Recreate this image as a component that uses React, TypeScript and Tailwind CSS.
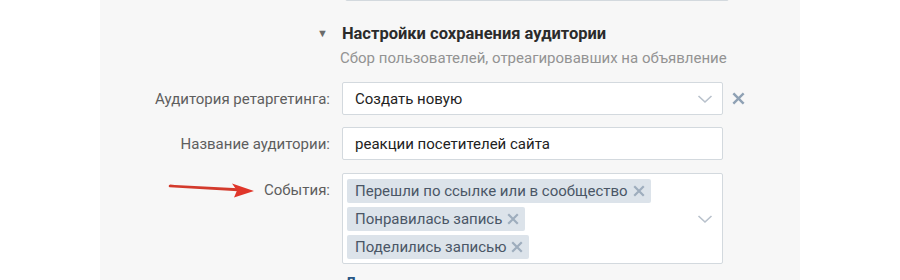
import React from "react";

const Chevron = () => (
  <svg width="16" height="10" viewBox="0 0 16 10" className="shrink-0">
    <path d="M1.5 2 L8 8 L14.5 2" fill="none" stroke="#b8c1cc" strokeWidth="1.6" />
  </svg>
);

const Cross = ({ size = 12, color = "#9eadbd" }: any) => (
  <svg width={size} height={size} viewBox="0 0 12 12" className="shrink-0">
    <path d="M2 2 L10 10 M10 2 L2 10" stroke={color} strokeWidth="2.2" strokeLinecap="square" />
  </svg>
);

const Tag = ({ text }: { text: string }) => (
  <div className="flex items-center h-[24px] pl-[8px] pr-[6px] gap-[5px] rounded-[2px] bg-[#dce3ea] text-[#4a5666]">
    <span>{text}</span>
    <Cross />
  </div>
);

const App = () => {
  return (
    <div className="w-[900px] h-[280px] bg-white overflow-hidden font-['Roboto',sans-serif] text-[15px] leading-[20px]">
      <div className="flow-root mx-auto w-[700px] h-full bg-[#f7f7f7]">
        <div className="ml-[245px] w-[384px] h-[33px] mt-[-32px] bg-white border border-[#d3d9de] rounded-[2px]" />

        <div className="flex items-center mt-[23px] ml-[217px] gap-[14px]">
          <span className="text-[#6b6b6b] text-[11px]">▼</span>
          <span className="font-bold text-[#2b2b2b] text-[16.5px]">Настройки сохранения аудитории</span>
        </div>
        <div className="ml-[240px] mt-[4px] text-[#939393]">
          Сбор пользователей, отреагировавших на объявление
        </div>

        <div className="flex items-center mt-[14px]">
          <div className="w-[242px] pr-[12px] text-right text-[#5e5e5e]">Аудитория ретаргетинга:</div>
          <div className="w-[381px] h-[33px] flex items-center justify-between pl-[12px] pr-[9px] bg-white border border-[#d3d9de] rounded-[2px] text-[#222]">
            <span>Создать новую</span>
            <Chevron />
          </div>
          <div className="ml-[9px]">
            <Cross size={13} color="#8fa1b4" />
          </div>
        </div>

        <div className="flex items-center mt-[12px]">
          <div className="w-[242px] pr-[12px] text-right text-[#5e5e5e]">Название аудитории:</div>
          <div className="w-[381px] h-[33px] flex items-center pl-[12px] bg-white border border-[#d3d9de] rounded-[2px] text-[#222]">
            реакции посетителей сайта
          </div>
        </div>

        <div className="flex items-start mt-[13px]">
          <div className="w-[242px] pr-[12px] pt-[7px] flex justify-end items-center gap-[8px] text-[#5e5e5e]">
            <svg width="88" height="16" viewBox="0 0 88 16">
              <path d="M2 4 L70 7.6 L70 7.9 Z" fill="#d33a2c" stroke="#d33a2c" strokeWidth="2.6" strokeLinejoin="round" />
              <path d="M64 1.5 L86 9 L66 15.5 L69 8.5 Z" fill="#e0362a" />
            </svg>
            <span>События:</span>
          </div>
          <div className="w-[381px] h-[91px] flex items-center pl-[4px] pr-[9px] bg-white border border-[#d3d9de] rounded-[2px]">
            <div className="flex-1 flex flex-col items-start gap-[4px]">
              <Tag text="Перешли по ссылке или в сообщество" />
              <Tag text="Понравилась запись" />
              <Tag text="Поделились записью" />
            </div>
            <Chevron />
          </div>
        </div>

        <div className="ml-[245px] mt-[9px] text-[#2a5885] font-bold">Дополнительно</div>
      </div>
    </div>
  );
};

export default App;
